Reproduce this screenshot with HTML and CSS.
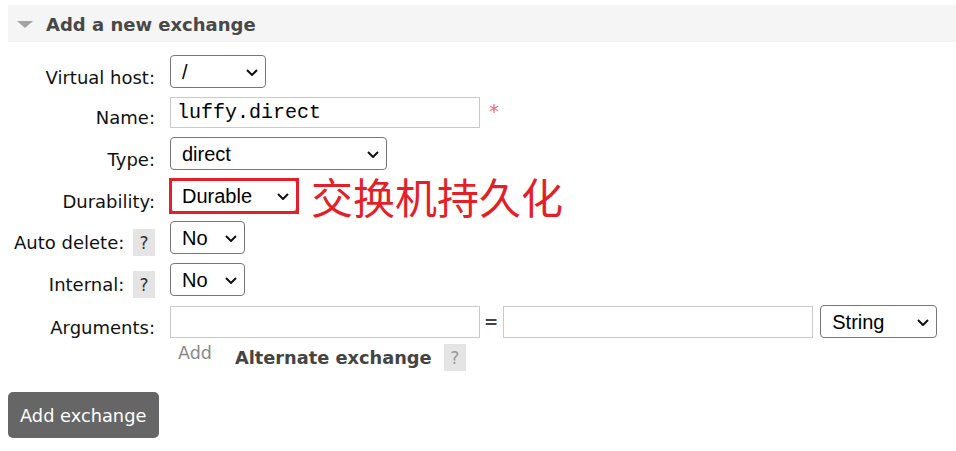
FILE: index.html
```html
<!DOCTYPE html>
<html lang="en">
<head>
<meta charset="utf-8">
<title>Add a new exchange</title>
<link rel="stylesheet" href="styles.css">
</head>
<body>
<div class="page">
  <div class="section-head">
    <span class="tri"></span>
    <h2 class="title">Add a new exchange</h2>
  </div>

  <form class="form">
    <label class="lbl">Virtual host:</label>
    <div class="ctl">
      <span class="sel w-vhost">
        <select><option>/</option></select>
        <svg class="chev" viewBox="0 0 12 7"><path d="M1 1 L6 6 L11 1"/></svg>
      </span>
    </div>

    <label class="lbl">Name:</label>
    <div class="ctl">
      <input class="txt name" type="text" value="luffy.direct">
      <span class="req">*</span>
    </div>

    <label class="lbl">Type:</label>
    <div class="ctl">
      <span class="sel w-type">
        <select><option>direct</option></select>
        <svg class="chev" viewBox="0 0 12 7"><path d="M1 1 L6 6 L11 1"/></svg>
      </span>
    </div>

    <label class="lbl">Durability:</label>
    <div class="ctl">
      <span class="sel w-dur marked">
        <select><option>Durable</option></select>
        <svg class="chev" viewBox="0 0 12 7"><path d="M1 1 L6 6 L11 1"/></svg>
      </span>
      <span class="note">交换机持久化</span>
    </div>

    <label class="lbl">Auto delete: <span class="help">?</span></label>
    <div class="ctl">
      <span class="sel w-bool">
        <select><option>No</option></select>
        <svg class="chev" viewBox="0 0 12 7"><path d="M1 1 L6 6 L11 1"/></svg>
      </span>
    </div>

    <label class="lbl">Internal: <span class="help">?</span></label>
    <div class="ctl">
      <span class="sel w-bool">
        <select><option>No</option></select>
        <svg class="chev" viewBox="0 0 12 7"><path d="M1 1 L6 6 L11 1"/></svg>
      </span>
    </div>

    <label class="lbl">Arguments:</label>
    <div class="ctl args">
      <input class="txt arg" type="text">
      <span class="eq">=</span>
      <input class="txt arg" type="text">
      <span class="sel w-str">
        <select><option>String</option></select>
        <svg class="chev" viewBox="0 0 12 7"><path d="M1 1 L6 6 L11 1"/></svg>
      </span>
    </div>

    <div class="extras">
      <span class="add">Add</span>
      <span class="alt">Alternate exchange</span>
      <span class="help dim">?</span>
    </div>
  </form>

  <button class="btn" type="button">Add exchange</button>
</div>
</body>
</html>
```

FILE: styles.css
```css
html, body {
  margin: 0;
  padding: 0;
  background: #fff;
}

body {
  font-family: Verdana, "DejaVu Sans", sans-serif;
  font-size: 18px;
  color: #000;
}

.page {
  padding: 5px 0 0 8px;
}

.section-head {
  display: flex;
  align-items: center;
  height: 37px;
  background: #f5f5f5;
  padding-left: 9px;
}

.tri {
  width: 0;
  height: 0;
  border-left: 8px solid transparent;
  border-right: 8px solid transparent;
  border-top: 7px solid #a3a3a3;
  margin-top: 2px;
}

.title {
  margin: 0 0 0 13px;
  padding-top: 2px;
  font-size: 18px;
  font-weight: bold;
  color: #484848;
  line-height: 22px;
}

.form {
  display: grid;
  grid-template-columns: 147px auto;
  column-gap: 15px;
  row-gap: 9px;
  align-items: end;
  margin-top: 13px;
}

.lbl {
  justify-self: end;
  text-align: right;
  line-height: 20px;
  white-space: nowrap;
  color: #111;
}

.ctl {
  display: flex;
  align-items: center;
}

.help {
  display: inline-block;
  box-sizing: border-box;
  width: 22px;
  height: 27px;
  padding-top: 2px;
  line-height: 25px;
  margin-left: 3px;
  margin-bottom: -2px;
  text-align: center;
  background: #e4e4e4;
  color: #333;
  font-size: 17px;
}

.help.dim {
  color: #9a9a9a;
  margin: 0 0 0 12px;
}

.sel {
  position: relative;
  display: inline-block;
}

.sel select {
  display: block;
  -webkit-appearance: none;
  appearance: none;
  box-sizing: border-box;
  height: 33px;
  margin: 0;
  padding: 0 28px 0 11px;
  border: 1px solid #767676;
  border-radius: 4px;
  background: #fff;
  color: #000;
  font-family: Arial, "Liberation Sans", sans-serif;
  font-size: 20px;
}

.chev {
  position: absolute;
  right: 8px;
  top: 50%;
  width: 12px;
  height: 7px;
  margin-top: -3px;
  fill: none;
  stroke: #111;
  stroke-width: 2;
  pointer-events: none;
}

.w-vhost select { width: 96px; }
.w-type select { width: 217px; }
.w-dur select { width: 127px; }
.w-bool select { width: 75px; }
.w-str select { width: 117px; }

.marked::after {
  content: "";
  position: absolute;
  top: -1px;
  left: -1px;
  right: -2px;
  bottom: -2px;
  border: 3px solid #e51f2a;
  pointer-events: none;
}

.note {
  margin-left: 14px;
  font-family: "Noto Sans CJK SC", sans-serif;
  font-size: 42px;
  line-height: 33px;
  color: #e51f2a;
  white-space: nowrap;
}

.txt {
  box-sizing: border-box;
  width: 310px;
  margin: 0;
  padding: 0 6px;
  border: 1px solid #cacaca;
  border-radius: 0;
  background: #fff;
  color: #000;
  font-family: "Courier New", "Liberation Mono", monospace;
  font-size: 20px;
}

.txt.name { height: 31px; }
.txt.arg { height: 32px; }

.req {
  align-self: flex-start;
  margin-left: 9px;
  margin-top: 4px;
  color: #f07070;
  font-size: 20px;
  line-height: 20px;
}

.args .eq {
  margin: 0 5px 0 4px;
  color: #444;
  font-weight: bold;
  font-size: 17px;
  line-height: 20px;
}

.args .sel { margin-left: 7px; }

.extras {
  grid-column: 2;
  display: flex;
  align-items: center;
  height: 28px;
  margin-top: -4px;
}

.add {
  align-self: flex-start;
  padding-left: 8px;
  line-height: 20px;
  font-size: 17.5px;
  color: #888;
}

.alt {
  margin-left: 23px;
  font-weight: bold;
  font-size: 17.8px;
  color: #444;
  line-height: 20px;
  padding-top: 2px;
}

.btn {
  display: block;
  box-sizing: border-box;
  width: 151px;
  height: 46px;
  margin: 21px 0 0;
  padding: 0 12px;
  border: 0;
  border-radius: 5px;
  background: #666;
  color: #fff;
  font-family: Verdana, "DejaVu Sans", sans-serif;
  font-size: 17.8px;
  text-align: left;
}
```
